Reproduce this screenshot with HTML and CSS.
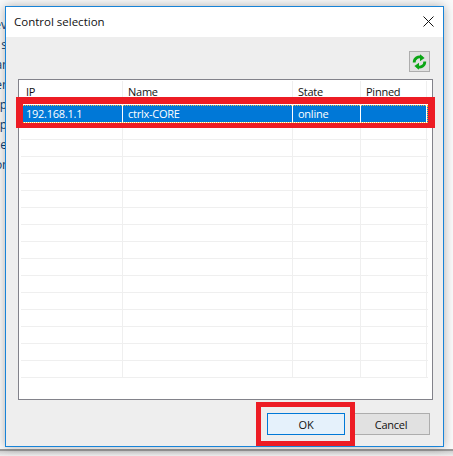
FILE: index.html
```html
<!DOCTYPE html>
<html lang="en">
<head>
<meta charset="utf-8">
<title>Control selection</title>
<link rel="stylesheet" href="styles.css">
</head>
<body>
<div class="desktop">
  <div class="behind">
    <span>ev</span><span>s</span><span>ar</span><span>er</span><span>rp</span><span>op</span><span>ce</span><span>or</span>
  </div>
  <div class="under"></div>
  <div class="window">
    <header class="titlebar">
      <span class="title">Control selection</span>
      <svg class="close" width="11" height="11" viewBox="0 0 11 11"><path d="M.5.5l10 10M10.5.5l-10 10" stroke="#111" stroke-width="1" fill="none"/></svg>
    </header>
    <main class="content">
      <div class="toolbar">
        <button class="refresh" aria-label="Refresh">
          <svg width="15" height="16" viewBox="0 0 15 16"><path d="M2.2 8.5A5.3 5.3 0 0 1 10 3.6" stroke="#0aa514" stroke-width="2.8" fill="none"/><path d="M8 .3l4.6 3.6L8 7.3z" fill="#0aa514"/><path d="M12.8 7.5A5.3 5.3 0 0 1 5 12.4" stroke="#0aa514" stroke-width="2.8" fill="none"/><path d="M7 15.7l-4.6-3.6L7 8.7z" fill="#0aa514"/></svg>
        </button>
      </div>
      <div class="table">
        <div class="row head"><div>IP</div><div>Name</div><div>State</div><div>Pinned</div><div></div></div>
        <div class="row selected"><div>192.168.1.1</div><div>ctrlx-CORE</div><div>online</div><div></div><div></div></div>
        <div class="row"><div></div><div></div><div></div><div></div><div></div></div>
        <div class="row"><div></div><div></div><div></div><div></div><div></div></div>
        <div class="row"><div></div><div></div><div></div><div></div><div></div></div>
        <div class="row"><div></div><div></div><div></div><div></div><div></div></div>
        <div class="row"><div></div><div></div><div></div><div></div><div></div></div>
        <div class="row"><div></div><div></div><div></div><div></div><div></div></div>
        <div class="row"><div></div><div></div><div></div><div></div><div></div></div>
        <div class="row"><div></div><div></div><div></div><div></div><div></div></div>
        <div class="row"><div></div><div></div><div></div><div></div><div></div></div>
        <div class="row"><div></div><div></div><div></div><div></div><div></div></div>
        <div class="row"><div></div><div></div><div></div><div></div><div></div></div>
        <div class="row"><div></div><div></div><div></div><div></div><div></div></div>
        <div class="row"><div></div><div></div><div></div><div></div><div></div></div>
        <div class="row"><div></div><div></div><div></div><div></div><div></div></div>
        <div class="row"><div></div><div></div><div></div><div></div><div></div></div>
      </div>
      <div class="actions">
        <button class="btn primary">OK</button>
        <button class="btn">Cancel</button>
      </div>
    </main>
  </div>
  <div class="mark mark-row"></div>
  <div class="mark mark-ok"></div>
</div>
</body>
</html>
```
FILE: styles.css
```css
* { box-sizing: border-box; }
html, body { margin: 0; padding: 0; }
body { width: 453px; height: 456px; overflow: hidden; background: #eee; font-family: "Open Sans", "Noto Sans", sans-serif; font-size: 11px; letter-spacing: -.25px; color: #111; }
.desktop { position: relative; width: 453px; height: 456px; background: #fafafa; overflow: hidden; }
.behind { position: absolute; left: 0; top: 15px; width: 7px; display: flex; flex-direction: column; direction: rtl; font-size: 12px; letter-spacing: 0; line-height: 20px; color: #10406e; }
.behind span { height: 20px; white-space: nowrap; }
.under { position: absolute; left: 0; right: 0; top: 449px; height: 7px; background: linear-gradient(#999 0 2px, #cfcfcf 2px, #eee 100%); }
.window { position: absolute; left: 5px; top: 6px; width: 439px; height: 441px; border: 1px solid #1883d7; background: #eee; display: flex; flex-direction: column; box-shadow: 0 0 10px rgba(0,0,0,.3); }
.titlebar { height: 30px; flex: none; background: #fff; display: flex; align-items: center; justify-content: space-between; padding: 0 9px 2px 8px; }
.title { font-size: 11.5px; letter-spacing: 0; }
.content { flex: 1; display: flex; flex-direction: column; padding: 14px 11px 10px 12px; }
.toolbar { display: flex; justify-content: flex-end; height: 21px; margin-bottom: 7px; padding-right: 2px; }
.refresh { width: 21px; height: 21px; padding: 0; background: #e1e1e1; border: 1px solid #adadad; display: flex; align-items: center; justify-content: center; }
.table { height: 321px; width: 415px; background: #fff; border: 1px solid #82828a; padding: 1px 4px 0 2px; overflow: hidden; }
.row { display: grid; grid-template-columns: 102px 170px 68px 66px 1fr; height: 17px; color: #111; border-bottom: 1px solid #efefef; }
.row > div { border-right: 1px solid #efefef; padding-left: 5px; line-height: 16px; white-space: nowrap; }
.head { height: 24px; border-bottom: 0; }
.head > div { line-height: 22px; }
.selected { height: 18px; background: #0078d7; color: #fff; border-bottom: 1px solid #fff; outline: 1px dotted #f0c040; outline-offset: -1px; }
.selected > div { border-right-color: #fff; line-height: 17px; }
.actions { display: flex; justify-content: flex-end; margin-top: 13px; padding-right: 2px; }
.btn { height: 22px; width: 78px; padding: 0; font: inherit; letter-spacing: inherit; color: #111; background: #e1e1e1; border: 1px solid #adadad; }
.btn.primary { background: #e5f1fb; border-color: #0078d7; margin-right: 7px; }
.mark { position: absolute; border: 5px solid #ed1c24; }
.mark-row { left: 16px; top: 97px; width: 419px; height: 31px; border-width: 7px 7px 5px 7px; }
.mark-ok { left: 256px; top: 402px; width: 99px; height: 44px; }
```
